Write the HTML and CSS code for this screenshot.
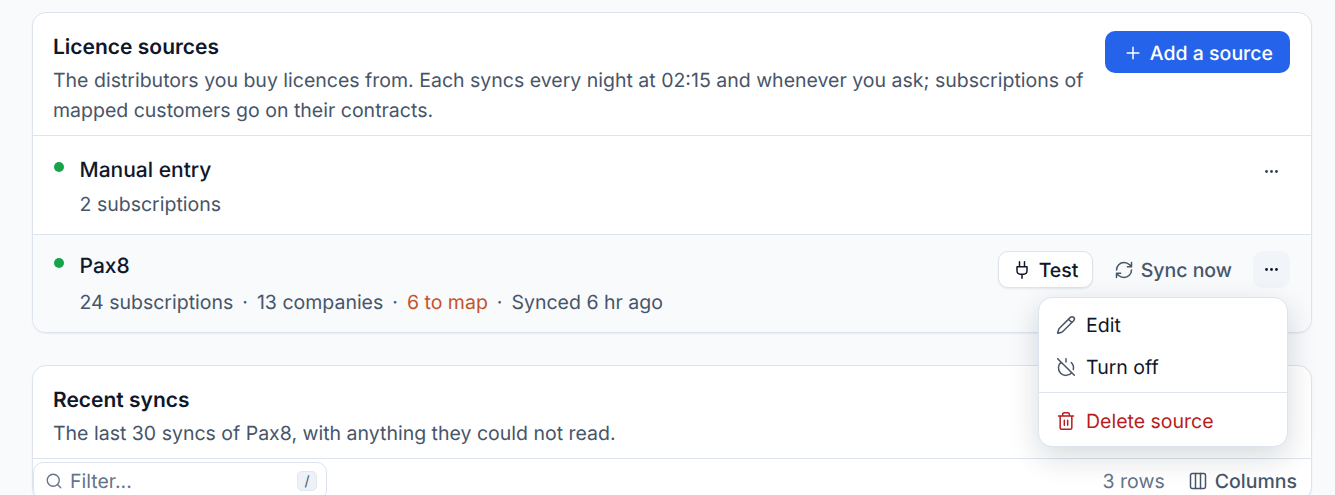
FILE: index.html
```html
<!DOCTYPE html>
<html>
<head>
	<meta charset="utf-8">
	<title>Licence sources</title>
	<link rel="stylesheet" href="styles.css">
</head>
<body>
<div class="page">
	<section class="card">
		<div class="card-head">
			<div class="head-text">
				<h2>Licence sources</h2>
				<p>The distributors you buy licences from. Each syncs every night at 02:15 and whenever you ask; subscriptions of mapped customers go on their contracts.</p>
			</div>
			<button class="btn-primary">
				<svg class="icon" viewBox="0 0 24 24"><path d="M5 12h14M12 5v14"/></svg>
				Add a source
			</button>
		</div>
		<div class="source source-first">
			<span class="dot"></span>
			<div class="source-body">
				<div class="source-name">Manual entry</div>
				<div class="source-meta">2 subscriptions</div>
			</div>
			<div class="source-actions">
				<button class="btn-more">
					<svg class="icon-more" viewBox="0 0 24 24"><circle cx="5" cy="12" r="2"/><circle cx="12" cy="12" r="2"/><circle cx="19" cy="12" r="2"/></svg>
				</button>
			</div>
		</div>
		<div class="source source-hover">
			<span class="dot"></span>
			<div class="source-body">
				<div class="source-name">Pax8</div>
				<div class="source-meta">
					<span>24 subscriptions</span><i>·</i><span>13 companies</span><i>·</i><span class="warn">6 to map</span><i>·</i><span>Synced 6 hr ago</span>
				</div>
			</div>
			<div class="source-actions">
				<button class="btn-test">
					<svg class="icon" viewBox="0 0 24 24"><path d="M12 22v-5M9 8V2M15 8V2M18 8v5a4 4 0 0 1-4 4h-4a4 4 0 0 1-4-4V8Z"/></svg>
					Test
				</button>
				<button class="btn-ghost">
					<svg class="icon" viewBox="0 0 24 24"><path d="M3 12a9 9 0 0 1 9-9 9.75 9.75 0 0 1 6.74 2.74L21 8M21 3v5h-5M21 12a9 9 0 0 1-9 9 9.75 9.75 0 0 1-6.74-2.74L3 16M8 16H3v5"/></svg>
					Sync now
				</button>
				<button class="btn-more open">
					<svg class="icon-more" viewBox="0 0 24 24"><circle cx="5" cy="12" r="2"/><circle cx="12" cy="12" r="2"/><circle cx="19" cy="12" r="2"/></svg>
				</button>
			</div>
			<div class="menu">
				<div class="menu-item">
					<svg class="icon" viewBox="0 0 24 24"><path d="M21.174 6.812a1 1 0 0 0-3.986-3.987L3.842 16.174a2 2 0 0 0-.5.83l-1.321 4.352a.5.5 0 0 0 .623.622l4.353-1.32a2 2 0 0 0 .83-.497zM15 5l4 4"/></svg>
					Edit
				</div>
				<div class="menu-item">
					<svg class="icon" viewBox="0 0 24 24"><path d="M18.36 6.64A9 9 0 0 1 20.77 15M6.16 6.16a9 9 0 1 0 12.68 12.68M12 2v4M2 2l20 20"/></svg>
					Turn off
				</div>
				<div class="menu-line"></div>
				<div class="menu-item danger">
					<svg class="icon" viewBox="0 0 24 24"><path d="M3 6h18M19 6v14a2 2 0 0 1-2 2H7a2 2 0 0 1-2-2V6M8 6V4a2 2 0 0 1 2-2h4a2 2 0 0 1 2 2v2M10 11v6M14 11v6"/></svg>
					Delete source
				</div>
			</div>
		</div>
	</section>

	<section class="card">
		<div class="card-head">
			<div class="head-text">
				<h2>Recent syncs</h2>
				<p>The last 30 syncs of Pax8, with anything they could not read.</p>
			</div>
		</div>
		<div class="toolbar">
			<div class="filter">
				<svg class="icon" viewBox="0 0 24 24"><circle cx="11" cy="11" r="8"/><path d="m21 21-4.3-4.3"/></svg>
				<span class="filter-text">Filter...</span>
				<span class="kbd">/</span>
			</div>
			<div class="toolbar-right">
				<span class="rows">3 rows</span>
				<span class="columns">
					<svg class="icon" viewBox="0 0 24 24"><rect x="3" y="3" width="18" height="18" rx="2"/><path d="M9 3v18M15 3v18"/></svg>
					Columns
				</span>
			</div>
		</div>
	</section>
</div>
</body>
</html>
```

FILE: styles.css
```css
* {
	box-sizing: border-box;
}
html, body {
	height: 100%;
	overflow: hidden;
}
body {
	margin: 0;
	background-color: #f8fafc;
	font-family: "Inter", "Liberation Sans", sans-serif;
	font-size: 19.5px;
	color: #0f172a;
	text-rendering: geometricPrecision;
}
.page {
	padding: 12px 23px 0 32px;
}
.card {
	background-color: #fff;
	border: 1px solid #dde4ee;
	border-radius: 14px;
	margin-bottom: 32px;
	box-shadow: 0 1px 2px rgba(15, 23, 42, 0.06);
}
.card-head {
	display: flex;
	justify-content: space-between;
	align-items: flex-start;
	gap: 20px;
	padding: 20px 21px 10px 20px;
	border-bottom: 1px solid #dde4ee;
}
.head-text {
	flex: 1;
}
.head-text h2 {
	margin: 0 0 2px;
	font-size: 21px;
	line-height: 30px;
	font-weight: 600;
}
.head-text p {
	margin: 0;
	line-height: 30px;
	color: #475569;
}
.icon {
	width: 20px;
	height: 20px;
	fill: none;
	stroke: currentColor;
	stroke-width: 1.8;
	stroke-linecap: round;
	stroke-linejoin: round;
	flex: none;
}
.icon-more {
	width: 17px;
	height: 17px;
	fill: currentColor;
}
button {
	font-family: inherit;
	font-size: 19.5px;
	text-rendering: geometricPrecision;
	border: none;
	background: none;
	display: flex;
	align-items: center;
	cursor: pointer;
}
.btn-primary {
	height: 42px;
	margin-top: -2px;
	padding: 1px 17px 0 18px;
	gap: 7px;
	border-radius: 10px;
	background-color: #2563eb;
	color: #fff;
	font-weight: 500;
}
.source {
	position: relative;
	display: flex;
	align-items: flex-start;
	padding: 20px 21px 0 20px;
	height: 98px;
}
.source-hover {
	padding-top: 17px;
	border-top: 1px solid #dde4ee;
	background-color: #f8fafc;
	border-radius: 0 0 13px 13px;
}
.dot {
	width: 10px;
	height: 10px;
	margin: 6px 15.5px 0 1px;
	border-radius: 50%;
	background-color: #16a34a;
	flex: none;
}
.source-body {
	flex: 1;
}
.source-name {
	font-size: 21px;
	line-height: 30px;
	font-weight: 500;
}
.source-meta {
	margin-top: 3px;
	line-height: 30px;
	color: #475569;
}
.source-hover .source-meta {
	margin-top: 5px;
}
.source-meta i {
	font-style: normal;
	margin: 0 9px;
}
.warn {
	color: #c2552d;
}
.source-actions {
	display: flex;
	align-items: center;
	gap: 7px;
}
.source-first .source-actions {
	margin-top: -3px;
}
.source-hover .source-actions {
	margin-top: -1px;
}
.btn-more {
	width: 37px;
	height: 37px;
	padding: 0;
	justify-content: center;
	border-radius: 10px;
	color: #334155;
}
.btn-more.open {
	background-color: #f1f5f9;
	color: #0f172a;
}
.btn-test {
	width: 95px;
	height: 37px;
	padding: 0 0 0 13px;
	gap: 7px;
	background-color: #fff;
	border: 1px solid #dde4ee;
	border-radius: 10px;
	box-shadow: 0 1px 2px rgba(15, 23, 42, 0.08);
	color: #0f172a;
	font-weight: 500;
}
.btn-ghost {
	height: 37px;
	padding: 0 14px;
	gap: 7px;
	color: #475569;
	font-weight: 500;
}
.menu {
	position: absolute;
	top: 62px;
	right: 23px;
	width: 250px;
	z-index: 10;
	padding: 6px 0 4px;
	background-color: #fff;
	border: 1px solid #dde4ee;
	border-radius: 14px;
	box-shadow: 0 10px 30px rgba(15, 23, 42, 0.16);
}
.menu-item {
	display: flex;
	align-items: center;
	gap: 10px;
	height: 42px;
	padding: 0 17px;
}
.menu-item .icon {
	color: #475569;
}
.menu-line {
	height: 1px;
	margin: 4px 0 7px;
	background-color: #dde4ee;
}
.menu-item.danger,
.menu-item.danger .icon {
	color: #b91c1c;
}
.toolbar {
	display: flex;
	justify-content: space-between;
	align-items: center;
	padding: 3px 14px 0 0;
}
.filter {
	display: flex;
	align-items: center;
	gap: 7px;
	width: 294px;
	height: 38px;
	padding: 0 9px 0 11px;
	background-color: #fff;
	border: 1px solid #dde4ee;
	border-radius: 10px;
	color: #64748b;
}
.filter .icon {
	width: 18px;
	height: 18px;
}
.filter-text {
	flex: 1;
}
.kbd {
	width: 20px;
	height: 20px;
	line-height: 20px;
	text-align: center;
	font-size: 14px;
	background-color: #eef2f6;
	border: 1px solid #e2e8f0;
	border-radius: 5px;
	color: #475569;
}
.toolbar-right {
	display: flex;
	align-items: center;
	gap: 23px;
}
.rows {
	color: #64748b;
}
.columns {
	display: flex;
	align-items: center;
	gap: 7px;
	font-weight: 500;
	color: #475569;
}
```
